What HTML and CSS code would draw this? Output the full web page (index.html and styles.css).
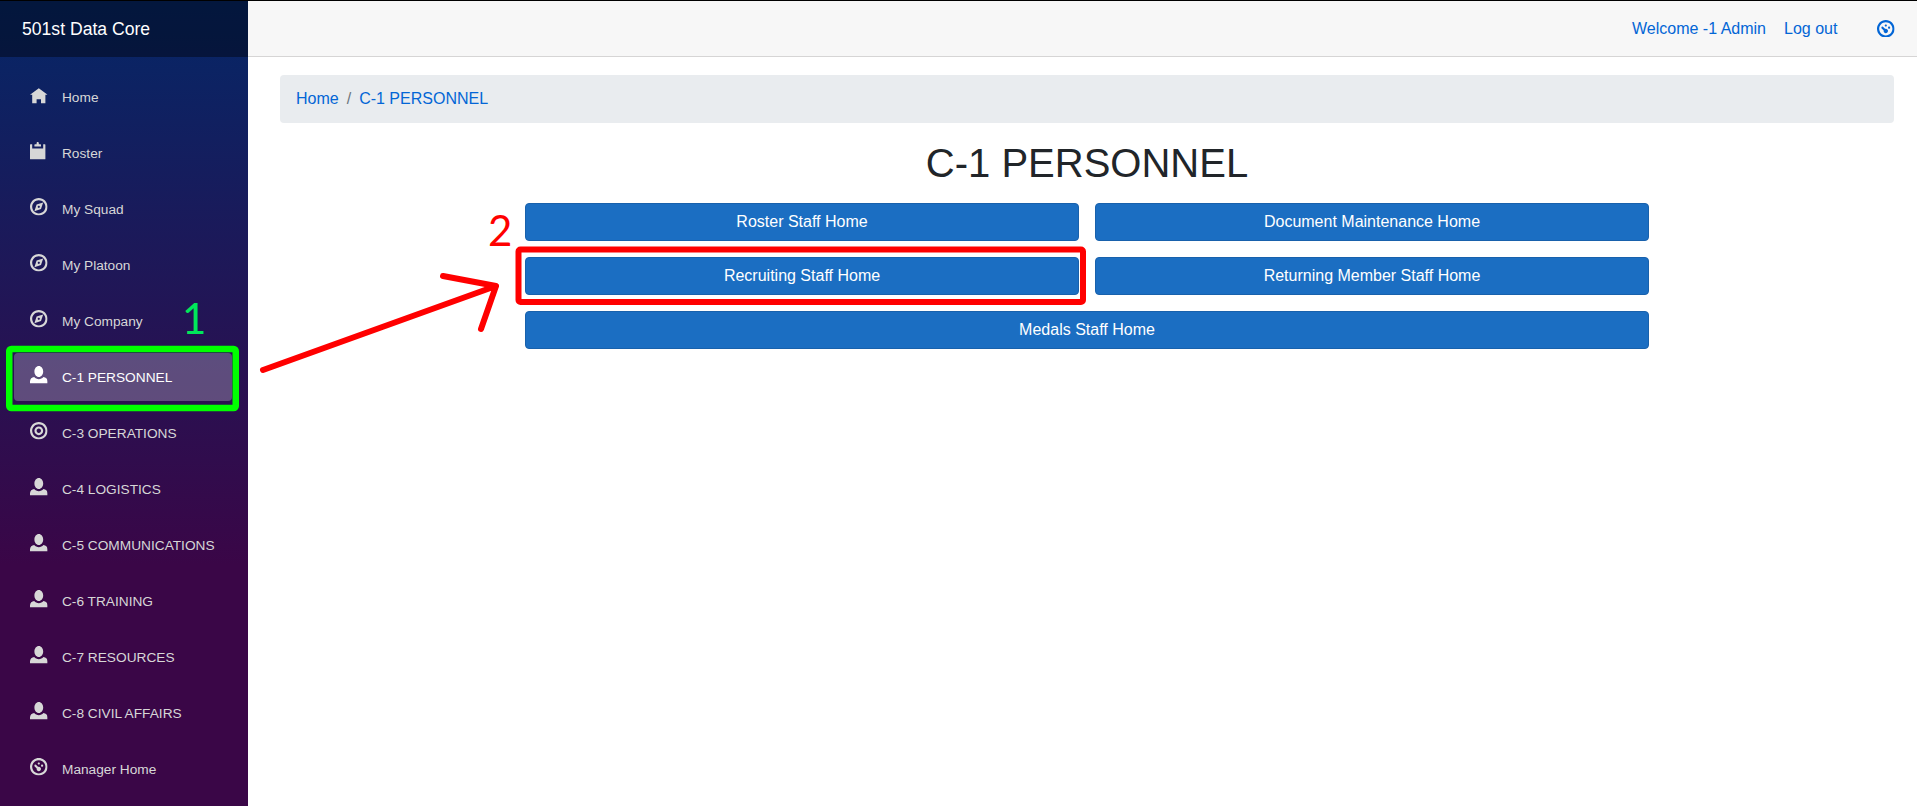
FILE: index.html
```html
<!DOCTYPE html>
<html lang="en">
<head>
  <meta charset="UTF-8" />
  <title>C-1 PERSONNEL</title>
  <link rel="stylesheet" href="styles.css">
</head>

<body>
  <svg class="icon-defs" width="0" height="0">
    <symbol id="oi-home" viewBox="0 -1 8 8"><path d="M4 0l-4 3h1v4h2v-2h2v2h2v-4.03l1 .03-4-3z"/></symbol>
    <symbol id="oi-clipboard" viewBox="0 0 8 8"><path d="M3.5 0c-.28 0-.5.22-.5.5v.5h-.75c-.14 0-.25.11-.25.25v.75h3v-.75c0-.14-.11-.25-.25-.25h-.75v-.5c0-.28-.22-.5-.5-.5zm-3.25 1c-.14 0-.25.11-.25.25v6.5c0 .14.11.25.25.25h6.5c.14 0 .25-.11.25-.25v-6.5c0-.14-.11-.25-.25-.25h-.75v2h-5v-2h-.75z"/></symbol>
    <symbol id="oi-compass" viewBox="0 0 8 8"><path d="M4 0c-2.2 0-4 1.8-4 4s1.8 4 4 4 4-1.8 4-4-1.8-4-4-4zm0 1c1.66 0 3 1.34 3 3s-1.34 3-3 3-3-1.34-3-3 1.34-3 3-3zm2 1l-3 1-1 3 3-1 1-3zm-2 1.5c.28 0 .5.22.5.5s-.22.5-.5.5-.5-.22-.5-.5.22-.5.5-.5z"/></symbol>
    <symbol id="oi-person" viewBox="0 0 8 8"><path d="M4 0c-1.1 0-2 1.12-2 2.5s.9 2.5 2 2.5 2-1.12 2-2.5-.9-2.5-2-2.5zm-2.09 5c-1.06.05-1.91.92-1.91 2v1h8v-1c0-1.08-.84-1.95-1.91-2-.54.61-1.28 1-2.09 1-.81 0-1.55-.39-2.09-1z"/></symbol>
    <symbol id="oi-target" viewBox="0 0 8 8"><path d="M4 0c-2.2 0-4 1.8-4 4s1.8 4 4 4 4-1.8 4-4-1.8-4-4-4zm0 1c1.66 0 3 1.34 3 3s-1.34 3-3 3-3-1.34-3-3 1.34-3 3-3zm0 1c-1.1 0-2 .9-2 2s.9 2 2 2 2-.9 2-2-.9-2-2-2zm0 1c.56 0 1 .44 1 1s-.44 1-1 1-1-.44-1-1 .44-1 1-1z"/></symbol>
    <symbol id="oi-dashboard" viewBox="0 0 8 8"><path d="M4 0c-2.2 0-4 1.8-4 4s1.8 4 4 4 4-1.8 4-4-1.8-4-4-4zm0 1c1.66 0 3 1.34 3 3s-1.34 3-3 3-3-1.34-3-3 1.34-3 3-3zm0 1c-.28 0-.5.22-.5.5s.22.5.5.5.5-.22.5-.5-.22-.5-.5-.5zm-1.66 1a.5.5 0 0 0-.19.84l.91.91c-.02.08-.06.16-.06.25 0 .55.45 1 1 1s1-.45 1-1-.45-1-1-1c-.09 0-.17.04-.25.06l-.91-.91a.5.5 0 0 0-.44-.16l-.06.01zm3.16 0c-.28 0-.5.22-.5.5s.22.5.5.5.5-.22.5-.5-.22-.5-.5-.5z"/></symbol>
  </svg>

  <div class="page">
    <aside class="sidebar">
      <div class="brand">501st Data Core</div>
      <nav class="side-nav">
        <a class="nav-link"><svg class="oi"><use href="#oi-home"/></svg>Home</a>
        <a class="nav-link"><svg class="oi"><use href="#oi-clipboard"/></svg>Roster</a>
        <a class="nav-link"><svg class="oi"><use href="#oi-compass"/></svg>My Squad</a>
        <a class="nav-link"><svg class="oi"><use href="#oi-compass"/></svg>My Platoon</a>
        <a class="nav-link"><svg class="oi"><use href="#oi-compass"/></svg>My Company</a>
        <a class="nav-link active"><svg class="oi"><use href="#oi-person"/></svg>C-1 PERSONNEL</a>
        <a class="nav-link"><svg class="oi"><use href="#oi-target"/></svg>C-3 OPERATIONS</a>
        <a class="nav-link"><svg class="oi"><use href="#oi-person"/></svg>C-4 LOGISTICS</a>
        <a class="nav-link"><svg class="oi"><use href="#oi-person"/></svg>C-5 COMMUNICATIONS</a>
        <a class="nav-link"><svg class="oi"><use href="#oi-person"/></svg>C-6 TRAINING</a>
        <a class="nav-link"><svg class="oi"><use href="#oi-person"/></svg>C-7 RESOURCES</a>
        <a class="nav-link"><svg class="oi"><use href="#oi-person"/></svg>C-8 CIVIL AFFAIRS</a>
        <a class="nav-link"><svg class="oi"><use href="#oi-dashboard"/></svg>Manager Home</a>
      </nav>
    </aside>

    <div class="main">
      <header class="top-row">
        <a class="top-link welcome">Welcome -1 Admin</a>
        <a class="top-link logout">Log out</a>
        <svg class="oi top-icon"><use href="#oi-dashboard"/></svg>
      </header>

      <main class="content">
        <ol class="breadcrumb">
          <li><a>Home</a></li>
          <li class="sep">/</li>
          <li><a>C-1 PERSONNEL</a></li>
        </ol>
        <h1>C-1 PERSONNEL</h1>
        <div class="button-grid">
          <a class="btn">Roster Staff Home</a>
          <a class="btn">Document Maintenance Home</a>
          <a class="btn">Recruiting Staff Home</a>
          <a class="btn">Returning Member Staff Home</a>
          <a class="btn wide">Medals Staff Home</a>
        </div>
      </main>
    </div>
  </div>

  <!-- annotations drawn over the screenshot -->
  <svg class="marks" width="1917" height="806" viewBox="0 0 1917 806">
    <rect class="mark-green" x="9.25" y="349" width="226.5" height="59" rx="2"/>
    <rect class="mark-red" x="518.5" y="249.5" width="564.5" height="52.5" rx="2"/>
    <path class="mark-arrow" d="M263 370L496 286M443 276L496 286L481 329"/>
  </svg>
  <span class="mark-num num-one">1</span>
  <span class="mark-num num-two">2</span>
</body>
</html>
```

FILE: styles.css
```css
html, body {
  margin: 0;
  height: 100%;
}

body {
  box-sizing: border-box;
  border-top: 1px solid #000;
  font-family: "Liberation Sans", Arial, sans-serif;
  font-size: 16px;
  color: #212529;
  background: #fff;
  overflow: hidden;
  position: relative;
}

.icon-defs {
  position: absolute;
}

.page {
  display: flex;
  height: 805px;
}

.sidebar {
  width: 248px;
  flex: none;
  background-image: linear-gradient(180deg, #052767 0%, #3a0647 70%);
}

.brand {
  height: 56px;
  display: flex;
  align-items: center;
  padding-left: 22px;
  font-size: 17.6px;
  color: #fff;
  background: rgba(0, 0, 0, 0.4);
}

.side-nav {
  display: flex;
  flex-direction: column;
  gap: 8px;
  padding: 16px 16px 0 14px;
}

.nav-link {
  display: flex;
  align-items: center;
  height: 48px;
  padding-left: 16px;
  border-radius: 4px;
  font-size: 13.7px;
  color: #d7d7d7;
}

.nav-link.active {
  color: #fff;
  background: rgba(255, 255, 255, 0.25);
}

.oi {
  width: 17.6px;
  height: 17.6px;
  flex: none;
  margin: -4px 14.4px 0 0;
  fill: currentColor;
}

.main {
  flex: 1;
  min-width: 0;
}

.top-row {
  box-sizing: border-box;
  height: 56px;
  display: flex;
  align-items: center;
  justify-content: flex-end;
  padding-right: 22px;
  background: #f7f7f7;
  border-bottom: 1px solid #d6d5d5;
}

.top-link {
  color: #0366d6;
}

.welcome {
  margin-right: 18px;
}

.logout {
  margin-right: 40px;
}

.top-icon {
  margin: 0;
  color: #0366d6;
}

.content {
  padding: 18px 23px 0 32px;
}

.breadcrumb {
  display: flex;
  align-items: center;
  gap: 8px;
  height: 48px;
  box-sizing: border-box;
  margin: 0 0 16px;
  padding: 0 16px;
  list-style: none;
  background: #e9ecef;
  border-radius: 4px;
}

.breadcrumb a {
  color: #0366d6;
}

.sep {
  color: #6c757d;
}

h1 {
  margin: 0 0 16px;
  font-size: 40px;
  font-weight: 500;
  line-height: 48px;
  text-align: center;
}

.button-grid {
  display: grid;
  grid-template-columns: 1fr 1fr;
  gap: 16px;
  width: 1124px;
  margin: 0 auto;
}

.btn {
  box-sizing: border-box;
  height: 38px;
  display: flex;
  align-items: center;
  justify-content: center;
  color: #fff;
  background: #1b6ec2;
  border: 1px solid #1861ac;
  border-radius: 4px;
}

.btn.wide {
  grid-column: span 2;
}

.marks {
  position: absolute;
  top: -1px;
  left: 0;
  fill: none;
  stroke-linecap: round;
  stroke-linejoin: round;
}

.mark-green {
  stroke: #00ff00;
  stroke-width: 6.5px;
}

.mark-red {
  stroke: #ff0000;
  stroke-width: 6px;
}

.mark-arrow {
  stroke: #ff0000;
  stroke-width: 6px;
}

.mark-num {
  position: absolute;
  font-family: "Lato", "DejaVu Sans", sans-serif;
  font-weight: 400;
  font-size: 42px;
  line-height: 1;
}

.num-one {
  left: 182px;
  top: 296px;
  color: #00e85a;
}

.num-two {
  left: 488px;
  top: 208px;
  color: #ff0000;
}
```
